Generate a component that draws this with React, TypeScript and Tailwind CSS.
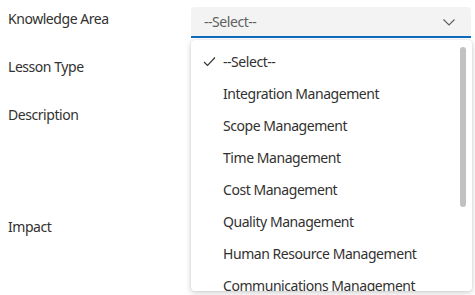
import React from 'react';

const options = [
  '--Select--',
  'Integration Management',
  'Scope Management',
  'Time Management',
  'Cost Management',
  'Quality Management',
  'Human Resource Management',
  'Communications Management',
];

function Check(): React.ReactElement {
  return (
    <svg width="13" height="13" viewBox="0 0 13 13" fill="none" aria-hidden="true">
      <path d="M1 7 L4.5 10.5 L12 2.5" stroke="#323130" strokeWidth="1.1" />
    </svg>
  );
}

function Chevron(): React.ReactElement {
  return (
    <svg width="14" height="14" viewBox="0 0 14 14" fill="none" aria-hidden="true">
      <path d="M1.5 4.5 L7 10 L12.5 4.5" stroke="#605e5c" strokeWidth="1.1" />
    </svg>
  );
}

export default function App(): React.ReactElement {
  return (
    <div
      className="relative w-[475px] h-[295px] overflow-hidden bg-white text-[14px] tracking-[-0.45px] text-[#323130]"
      style={{ fontFamily: '"Noto Sans", "Open Sans", sans-serif' }}
    >
      {/* Form labels */}
      <div className="flex flex-col pl-2">
        <div className="h-[38px] pt-[7px] leading-[24px]">Knowledge Area</div>
        <div className="h-[48px] pt-[17px] leading-[24px]">Lesson Type</div>
        <div className="h-[112px] pt-[17px] leading-[24px]">Description</div>
        <div className="pt-[17px] leading-[24px]">Impact</div>
      </div>

      {/* Select control */}
      <div className="absolute left-[191px] top-[7px] w-[280px] h-[31px] bg-[#f3f3f3] rounded-t-[4px] border-b-2 border-[#0f6cbd] flex items-center justify-between pl-[13px] pr-[15px]">
        <span className="text-[#616161]">--Select--</span>
        <Chevron />
      </div>

      {/* Dropdown list */}
      <div className="absolute left-[191px] top-[40px] w-[281px] h-[251px] bg-white rounded-[4px] shadow-[0_2px_6px_rgba(0,0,0,0.18),0_0_2px_rgba(0,0,0,0.12)] overflow-hidden">
        <div className="flex flex-col pt-[5px]">
          {options.map((o, i) => (
            <div key={o} className="h-[32px] flex items-center">
              <span className="w-[32px] flex pl-[12px]">{i === 0 && <Check />}</span>
              <span className="whitespace-nowrap">{o}</span>
            </div>
          ))}
        </div>
        <div className="absolute right-[6px] top-[7px] w-[6px] h-[160px] rounded-full bg-[#c1c1c1]" />
      </div>
    </div>
  );
}
